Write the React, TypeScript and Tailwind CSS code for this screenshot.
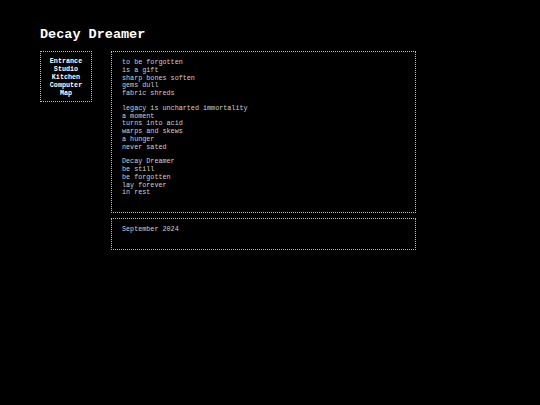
const navItems = ["Entrance", "Studio", "Kitchen", "Computer", "Map"]

const stanzas = [
  ["to be forgotten", "is a gift", "sharp bones soften", "gems dull", "fabric shreds"],
  ["legacy is uncharted immortality", "a moment", "turns into acid", "warps and skews", "a hunger", "never sated"],
  ["Decay Dreamer", "be still", "be forgotten", "lay forever", "in rest"],
]

export default function App() {
  return (
    <div className="min-h-[405px] w-full bg-black pl-[40px] pt-[27px] font-['Liberation_Mono',monospace] text-[6.75px] leading-[7.75px] text-[#d0d0d0]">
      <h1 className="text-[13.5px] font-bold leading-[16px] text-white">Decay Dreamer</h1>
      <div className="mt-[8px] flex items-start gap-[19px]">
        <nav className="flex w-[52px] flex-col items-center border border-dotted border-[#bdbdbd] pb-[4px] pt-[5px] font-bold text-white">
          {navItems.map((item) => (
            <span key={item} className="leading-[8px]">
              {item}
            </span>
          ))}
        </nav>
        <div className="flex w-[305px] flex-col gap-[5px]">
          <div className="flex flex-col gap-[7px] border border-dotted border-[#bdbdbd] pb-[15px] pl-[10px] pt-[7px]">
            {stanzas.map((lines, i) => (
              <p key={i}>
                {lines.map((line) => (
                  <span key={line} className="block">
                    {line}
                  </span>
                ))}
              </p>
            ))}
          </div>
          <div className="border border-dotted border-[#bdbdbd] pb-[15px] pl-[10px] pt-[7px]">
            <p>September 2024</p>
          </div>
        </div>
      </div>
    </div>
  )
}
